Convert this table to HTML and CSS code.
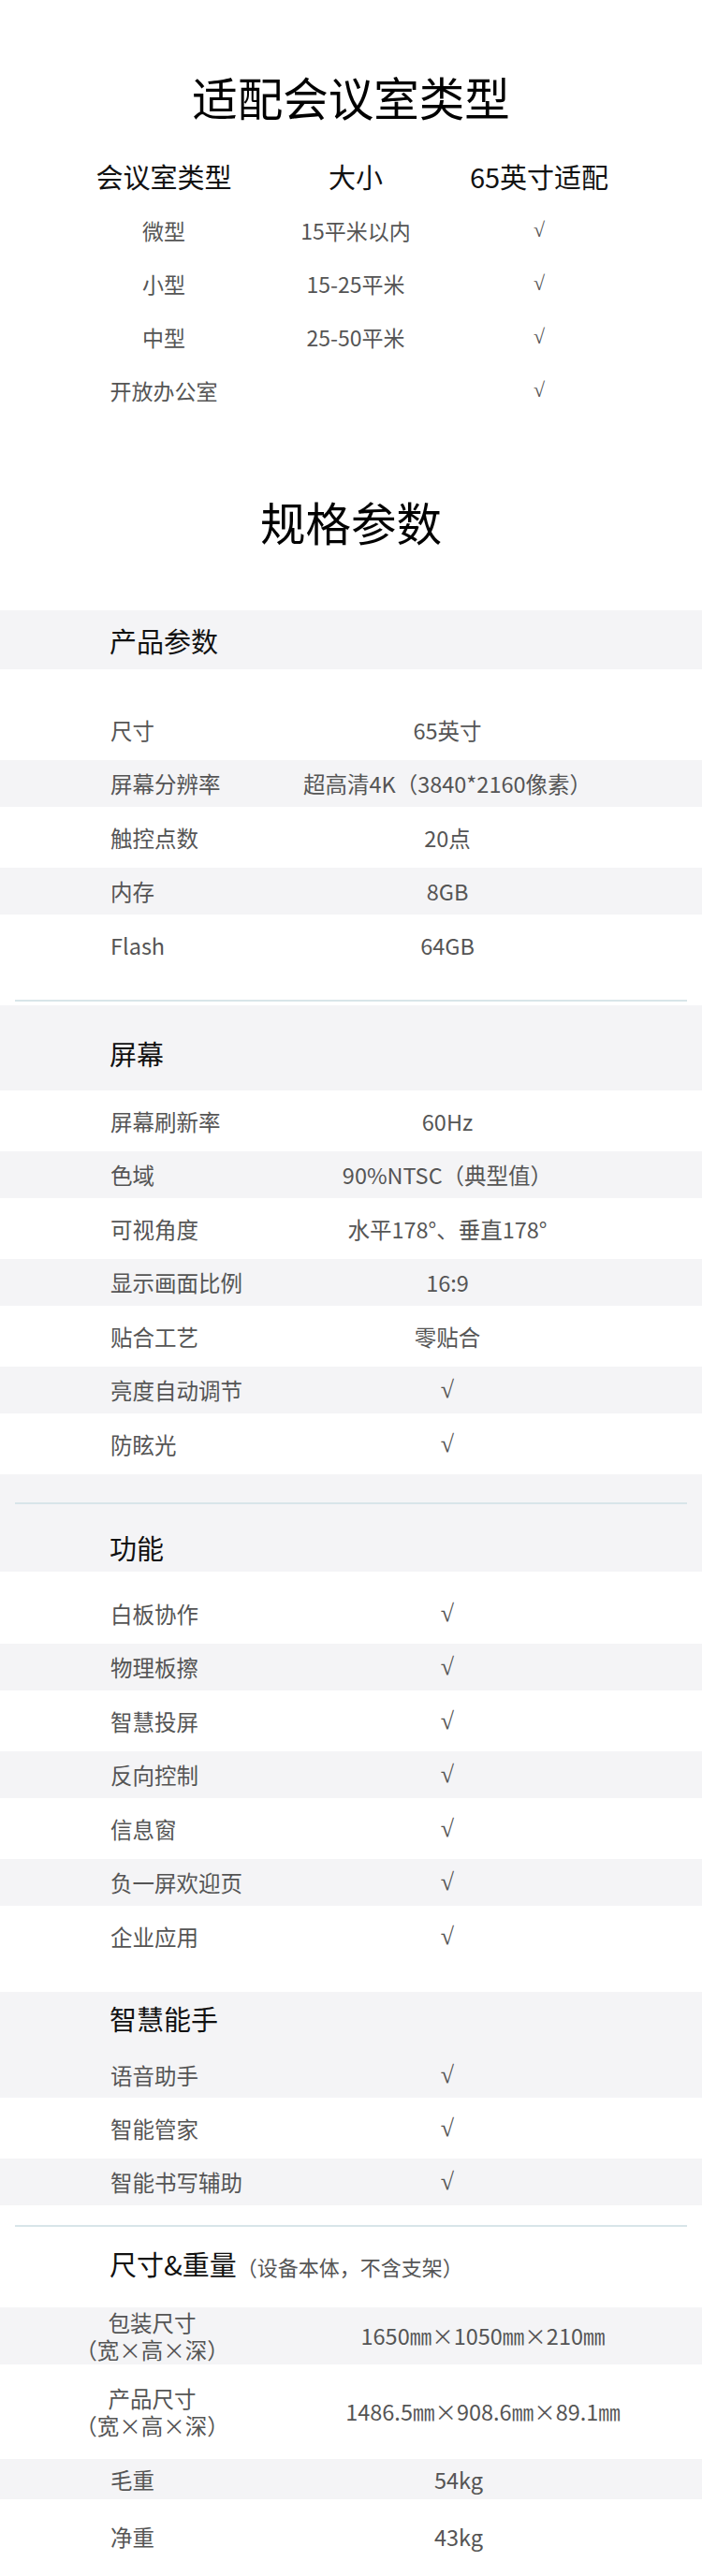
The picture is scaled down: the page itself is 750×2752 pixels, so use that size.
FILE: index.html
```html
<!DOCTYPE html>
<html lang="zh-CN">
<head>
<meta charset="utf-8">
<title>适配会议室类型 · 规格参数</title>
<link rel="stylesheet" href="styles.css">
</head>
<body>
<main class="page">
  <section class="fit">
    <h1 class="title title-fit">适配会议室类型</h1>
    <div class="fit-table">
      <div class="fit-row fit-head"><span>会议室类型</span><span>大小</span><span>65英寸适配</span></div>
      <div class="fit-row"><span>微型</span><span>15平米以内</span><span class="chk">√</span></div>
      <div class="fit-row"><span>小型</span><span>15-25平米</span><span class="chk">√</span></div>
      <div class="fit-row"><span>中型</span><span>25-50平米</span><span class="chk">√</span></div>
      <div class="fit-row"><span>开放办公室</span><span></span><span class="chk">√</span></div>
    </div>
  </section>

  <h1 class="title title-spec">规格参数</h1>

  <section class="group g-product">
    <div class="group-head">产品参数</div>
    <div class="rows">
      <div class="row"><span class="k">尺寸</span><span class="v">65英寸</span></div>
      <div class="row alt"><span class="k">屏幕分辨率</span><span class="v">超高清4K（3840*2160像素）</span></div>
      <div class="row"><span class="k">触控点数</span><span class="v">20点</span></div>
      <div class="row alt"><span class="k">内存</span><span class="v">8GB</span></div>
      <div class="row"><span class="k">Flash</span><span class="v">64GB</span></div>
    </div>
  </section>

  <div class="rule"></div>

  <section class="group g-screen">
    <div class="group-head">屏幕</div>
    <div class="rows">
      <div class="row"><span class="k">屏幕刷新率</span><span class="v">60Hz</span></div>
      <div class="row alt"><span class="k">色域</span><span class="v">90%NTSC（典型值）</span></div>
      <div class="row"><span class="k">可视角度</span><span class="v">水平178°、垂直178°</span></div>
      <div class="row alt"><span class="k">显示画面比例</span><span class="v">16:9</span></div>
      <div class="row"><span class="k">贴合工艺</span><span class="v">零贴合</span></div>
      <div class="row alt"><span class="k">亮度自动调节</span><span class="v chk">√</span></div>
      <div class="row"><span class="k">防眩光</span><span class="v chk">√</span></div>
    </div>
  </section>

  <div class="rule on-gray"></div>

  <section class="group g-func">
    <div class="group-head">功能</div>
    <div class="rows">
      <div class="row"><span class="k">白板协作</span><span class="v chk">√</span></div>
      <div class="row alt"><span class="k">物理板擦</span><span class="v chk">√</span></div>
      <div class="row"><span class="k">智慧投屏</span><span class="v chk">√</span></div>
      <div class="row alt"><span class="k">反向控制</span><span class="v chk">√</span></div>
      <div class="row"><span class="k">信息窗</span><span class="v chk">√</span></div>
      <div class="row alt"><span class="k">负一屏欢迎页</span><span class="v chk">√</span></div>
      <div class="row"><span class="k">企业应用</span><span class="v chk">√</span></div>
    </div>
  </section>

  <section class="group g-smart">
    <div class="group-head">智慧能手</div>
    <div class="rows">
      <div class="row alt first"><span class="k">语音助手</span><span class="v chk">√</span></div>
      <div class="row"><span class="k">智能管家</span><span class="v chk">√</span></div>
      <div class="row alt"><span class="k">智能书写辅助</span><span class="v chk">√</span></div>
    </div>
  </section>

  <div class="rule"></div>

  <section class="group g-dims">
    <div class="group-head">尺寸&amp;重量<span class="note">（设备本体，不含支架）</span></div>
    <div class="rows">
      <div class="drow alt"><span class="dk"><span class="dl">包装尺寸</span><span class="dl">（宽×高×深）</span></span><span class="dv">1650㎜×1050㎜×210㎜</span></div>
      <div class="drow"><span class="dk"><span class="dl">产品尺寸</span><span class="dl">（宽×高×深）</span></span><span class="dv">1486.5㎜×908.6㎜×89.1㎜</span></div>
      <div class="row wt alt"><span class="k">毛重</span><span class="v">54kg</span></div>
      <div class="row wt"><span class="k">净重</span><span class="v">43kg</span></div>
    </div>
  </section>
</main>
</body>
</html>
```

FILE: styles.css
```css
html, body {
  margin: 0;
  padding: 0;
  background: #ffffff;
}

body {
  font-family: "Noto Sans CJK SC", "Noto Sans", "Liberation Sans", sans-serif;
  color: #555555;
}

.page {
  width: 750px;
  overflow: hidden;
}

/* ---------- big titles ---------- */
.title {
  margin: 0;
  font-size: 48.5px;
  line-height: 60px;
  font-weight: 400;
  color: #000000;
  text-align: center;
}

.title-fit {
  padding-top: 73px;
}

.title-spec {
  padding: 82px 0 65px;
}

/* ---------- room fit table ---------- */
.fit-table {
  margin-top: 26px;
}

.fit-row {
  display: grid;
  grid-template-columns: 200px 210px 182px;
  padding-left: 75px;
  height: 57px;
  align-items: center;
  text-align: center;
  font-size: 23px;
  line-height: 30px;
  color: #555555;
}

.fit-row.fit-head {
  height: 58px;
  font-size: 29px;
  color: #111111;
}

.fit-row .chk {
  font-size: 22px;
}

/* check mark glyph: plain radical without overbar */
.chk {
  font-family: "Liberation Serif", "DejaVu Serif", serif;
  font-size: 26px;
  color: #555555;
}

/* ---------- spec groups ---------- */
.group-head {
  background: #f4f4f6;
  padding-left: 117px;
  font-size: 29px;
  line-height: 30px;
  color: #111111;
}

.g-product .group-head { padding-top: 17px; padding-bottom: 16px; }
.g-product .rows { margin: 32px 0 26px; }

.g-screen {
  margin-top: 4px;
  background: #f4f4f6;
  padding-bottom: 30px;
}
.g-screen .group-head { padding-top: 36px; padding-bottom: 25px; }

.g-func .group-head { padding-top: 31px; padding-bottom: 11px; }
.g-func .rows { margin: 12px 0 27px; }

.g-smart .group-head { padding-top: 13px; padding-bottom: 22px; }
.g-smart .rows { margin-bottom: 21px; }
.g-smart .row.first { height: 48px; }

.g-dims .group-head {
  background: #ffffff;
  padding-top: 24px;
  padding-bottom: 29px;
}

.note {
  font-size: 22px;
  color: #555555;
}

/* ---------- rows ---------- */
.row {
  display: grid;
  grid-template-columns: 190px 340px;
  padding-left: 118px;
  height: 65px;
  align-items: center;
  background: #ffffff;
  font-size: 23.5px;
  line-height: 30px;
  color: #555555;
}

.row.alt {
  background: #f4f4f6;
  height: 50px;
}

.row .v {
  text-align: center;
  white-space: nowrap;
}

.row.wt {
  grid-template-columns: 190px 364px;
  height: 80px;
}

.row.wt.alt {
  height: 43px;
}

.drow {
  display: grid;
  grid-template-columns: 325px 382px;
  height: 101px;
  align-items: center;
  text-align: center;
  background: #ffffff;
  font-size: 23.5px;
  line-height: 29px;
  color: #555555;
}

.drow.alt {
  background: #f4f4f6;
  height: 61px;
}

.dl {
  display: block;
}

.dv {
  white-space: nowrap;
}

/* ---------- dividers ---------- */
.rule {
  height: 2px;
  background-image: linear-gradient(#d8e5e9, #d8e5e9);
  background-size: 718px 2px;
  background-position: 16px 0;
  background-repeat: no-repeat;
}

.rule.on-gray {
  background-color: #f4f4f6;
}
```
